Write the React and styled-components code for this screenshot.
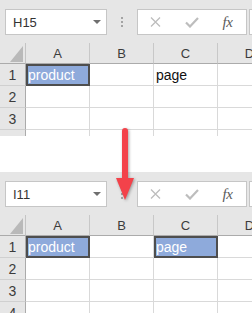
import React from 'react'
import styled, { createGlobalStyle } from 'styled-components'

const GlobalStyle = createGlobalStyle`
  body {
    margin: 0;
    background: #fff;
  }
`

const Page = styled.div`
  position: relative;
  width: 252px;
  height: 313px;
  overflow: hidden;
  background: #fff;
  font-family: "Liberation Sans", Arial, sans-serif;
`

const Sheet = styled.div`
  height: ${props => props.$height}px;
  margin-top: ${props => props.$offset || 0}px;
  overflow: hidden;
`

const Toolbar = styled.div`
  display: flex;
  align-items: flex-start;
  height: 43px;
  box-sizing: border-box;
  padding: 9px 0 0 5px;
  background: #e6e6e6;
`

const NameBox = styled.div`
  display: flex;
  align-items: center;
  justify-content: space-between;
  width: 102px;
  height: 26px;
  box-sizing: border-box;
  padding: 0 5px 0 7px;
  border: 1px solid #c6c6c6;
  background: #fff;
  font-size: 13px;
  color: #333;
`

const Caret = styled.span`
  width: 0;
  height: 0;
  border-left: 4px solid transparent;
  border-right: 4px solid transparent;
  border-top: 4px solid #6f6f6f;
`

const Grip = styled.div`
  display: flex;
  flex-direction: column;
  align-items: center;
  gap: 2px;
  width: 30px;
  padding-top: 8px;

  span {
    width: 2px;
    height: 2px;
    background: #a3a3a3;
  }
`

const FormulaBox = styled.div`
  display: flex;
  align-items: center;
  width: 110px;
  height: 26px;
  box-sizing: border-box;
  border: 1px solid #c6c6c6;
  background: #fff;
`

const Slot = styled.div`
  display: flex;
  align-items: center;
  justify-content: center;
  width: ${props => props.$w}px;
  height: 100%;
`

const Fx = styled.span`
  font-family: "Liberation Serif", "Times New Roman", serif;
  font-style: italic;
  font-size: 15px;
  color: #5a5a5a;
  letter-spacing: -0.5px;
`

const FormulaInput = styled.div`
  flex: 1;
  height: 26px;
  margin-left: 2px;
  box-sizing: border-box;
  border: 1px solid #c6c6c6;
  border-right: none;
  background: #fff;
`

const Grid = styled.div`
  display: grid;
  grid-template-columns: 26px repeat(4, 64px);
  grid-template-rows: 21px;
  grid-auto-rows: 22px;
`

const Corner = styled.div`
  display: flex;
  justify-content: flex-end;
  align-items: flex-end;
  padding: 0 2px 1px 0;
  background: #e6e6e6;
  border-right: 1px solid #c4c4c4;
  border-bottom: 1px solid #ababab;
`

const Triangle = styled.span`
  width: 13px;
  height: 16px;
  background: #b9b9b9;
  clip-path: polygon(100% 0, 100% 100%, 0 100%);
`

const ColHead = styled.div`
  background: #e6e6e6;
  border-right: 1px solid #c8c8c8;
  border-bottom: 1px solid #ababab;
  text-align: center;
  line-height: 21px;
  font-size: 13px;
  color: #3c3c3c;
`

const RowHead = styled.div`
  background: #e6e6e6;
  border-right: 1px solid #ababab;
  border-bottom: 1px solid #d0d0d0;
  text-align: center;
  line-height: 22px;
  font-size: 14px;
  color: #3c3c3c;
`

const Cell = styled.div`
  position: relative;
  padding-left: 2px;
  border-right: 1px solid #d9d9d9;
  border-bottom: 1px solid #d9d9d9;
  background: ${props => (props.$selected ? '#8eaadb' : '#fff')};
  color: ${props => (props.$selected ? '#fff' : '#111')};
  font-size: 14px;
  line-height: 22px;
  white-space: nowrap;

  &::after {
    content: '';
    display: ${props => (props.$selected ? 'block' : 'none')};
    position: absolute;
    top: 0;
    left: 0;
    right: -1px;
    bottom: -1px;
    border: 2px solid #4e4e4e;
  }
`

const Arrow = styled.svg`
  position: absolute;
  left: 114px;
  top: 126px;
  filter: drop-shadow(1px 1px 1.5px rgba(0, 0, 0, 0.35));
`

const columns = ['A', 'B', 'C', 'D']
const values = { A1: 'product', C1: 'page' }

const sheets = [
  { name: 'H15', height: 136, offset: 0, selected: ['A1'] },
  { name: 'I11', height: 141, offset: 36, selected: ['A1', 'C1'] }
]

const CloseIcon = () => (
  <svg width="11" height="10" viewBox="0 0 11 10">
    <path d="M1 0.5 L10 9.5 M10 0.5 L1 9.5" stroke="#bdbdbd" strokeWidth="1.3" fill="none" />
  </svg>
)

const CheckIcon = () => (
  <svg width="14" height="11" viewBox="0 0 14 11">
    <path d="M1 5.5 L5 9.5 L13 1" stroke="#bdbdbd" strokeWidth="2.2" fill="none" />
  </svg>
)

const SheetView = ({ sheet }) => (
  <Sheet $height={sheet.height} $offset={sheet.offset}>
    <Toolbar>
      <NameBox>
        {sheet.name}
        <Caret />
      </NameBox>
      <Grip>
        <span />
        <span />
        <span />
      </Grip>
      <FormulaBox>
        <Slot $w={35}>
          <CloseIcon />
        </Slot>
        <Slot $w={37}>
          <CheckIcon />
        </Slot>
        <Slot $w={35}>
          <Fx>fx</Fx>
        </Slot>
      </FormulaBox>
      <FormulaInput />
    </Toolbar>
    <Grid>
      <Corner>
        <Triangle />
      </Corner>
      {columns.map(col => (
        <ColHead key={col}>{col}</ColHead>
      ))}
      {[1, 2, 3, 4].map(row => (
        <React.Fragment key={row}>
          <RowHead>{row}</RowHead>
          {columns.map(col => {
            const id = col + row
            return (
              <Cell key={id} $selected={sheet.selected.includes(id)}>
                {values[id]}
              </Cell>
            )
          })}
        </React.Fragment>
      ))}
    </Grid>
  </Sheet>
)

const App = () => {
  return (
    <Page>
      <GlobalStyle />
      {sheets.map(sheet => (
        <SheetView key={sheet.name} sheet={sheet} />
      ))}
      <Arrow width="24" height="78" viewBox="0 0 24 78">
        <rect x="8" y="2" width="6" height="54" rx="3" fill="#f3424a" />
        <polygon points="2,52 20,52 11,74" fill="#f3424a" />
      </Arrow>
    </Page>
  )
}

export default App
